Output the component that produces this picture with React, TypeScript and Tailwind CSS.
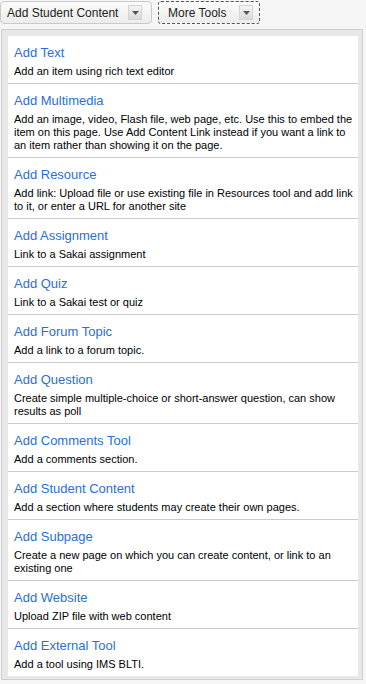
import React from 'react';

interface ToolItem {
  title: string;
  desc: string;
}

const tools: ToolItem[] = [
  { title: 'Add Text', desc: 'Add an item using rich text editor' },
  {
    title: 'Add Multimedia',
    desc: 'Add an image, video, Flash file, web page, etc. Use this to embed the item on this page. Use Add Content Link instead if you want a link to an item rather than showing it on the page.',
  },
  {
    title: 'Add Resource',
    desc: 'Add link: Upload file or use existing file in Resources tool and add link to it, or enter a URL for another site',
  },
  { title: 'Add Assignment', desc: 'Link to a Sakai assignment' },
  { title: 'Add Quiz', desc: 'Link to a Sakai test or quiz' },
  { title: 'Add Forum Topic', desc: 'Add a link to a forum topic.' },
  {
    title: 'Add Question',
    desc: 'Create simple multiple-choice or short-answer question, can show results as poll',
  },
  { title: 'Add Comments Tool', desc: 'Add a comments section.' },
  { title: 'Add Student Content', desc: 'Add a section where students may create their own pages.' },
  {
    title: 'Add Subpage',
    desc: 'Create a new page on which you can create content, or link to an existing one',
  },
  { title: 'Add Website', desc: 'Upload ZIP file with web content' },
  { title: 'Add External Tool', desc: 'Add a tool using IMS BLTI.' },
];

const ArrowBox: React.FC = () => (
  <span className="flex items-center justify-center w-[14px] h-[15px] border border-[#d4d4d4] bg-gradient-to-b from-[#f4f4f4] to-[#d9d9d9]">
    <svg width="7" height="4" viewBox="0 0 7 4">
      <polygon points="0,0 7,0 3.5,4" fill="#555" />
    </svg>
  </span>
);

export default function App() {
  return (
    <div className="w-[366px] h-[684px] overflow-hidden bg-[#f6f6f6] font-['Liberation_Sans',Arial,sans-serif]">
      {/* Toolbar */}
      <div className="flex items-start h-[29px] pt-[1px]">
        <button className="flex items-center gap-[10px] w-[152px] h-[23px] pl-[6px] pr-[9px] rounded-[4px] border border-[#c9c9c9] bg-gradient-to-b from-[#fbfbfb] to-[#ececec] text-[12px] text-[#222]">
          <span className="whitespace-nowrap">Add Student Content</span>
          <ArrowBox />
        </button>
        <button className="ml-[6px] flex items-center gap-[13px] w-[102px] h-[23px] pl-[9px] rounded-[3px] border border-dashed border-[#555] bg-gradient-to-b from-[#fbfbfb] to-[#ececec] text-[12px] text-[#222]">
          <span className="whitespace-nowrap">More Tools</span>
          <ArrowBox />
        </button>
      </div>

      {/* Panel */}
      <div className="ml-[1px] w-[362px] border border-[#cfcfcf] bg-[#e8e8e8] pt-[6px] pl-[6px] pr-[4px] pb-[3px]">
        <ul className="bg-white">
          {tools.map((t, i) => (
            <li
              key={t.title}
              className={
                i < tools.length - 1
                  ? 'pl-[6px] pr-0 pt-[8px] pb-[5px] border-b border-[#cccccc]'
                  : 'pl-[6px] pr-0 pt-[8px] pb-[5px]'
              }
            >
              <a className="block text-[13px] leading-[18px] text-[#2a6fd6] cursor-pointer">{t.title}</a>
              <p className="mt-[3px] text-[11px] leading-[13px] text-black">{t.desc}</p>
            </li>
          ))}
        </ul>
      </div>
    </div>
  );
}
